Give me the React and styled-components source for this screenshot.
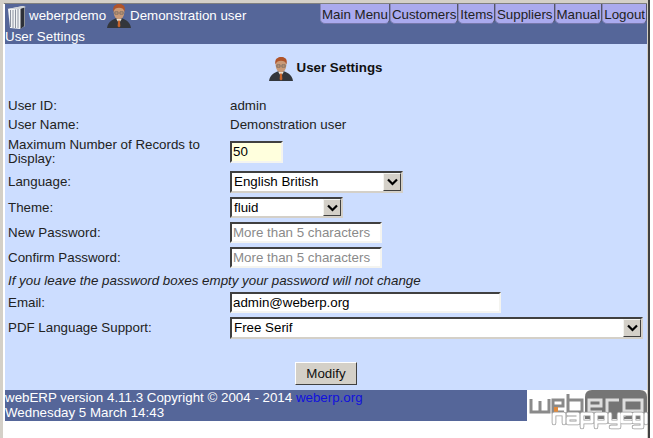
import React from "react";
import styled, { createGlobalStyle } from "styled-components";

const Global = createGlobalStyle`
  html, body { margin: 0; padding: 0; background: #fff; }
  body { font-family: "Liberation Sans", Arial, sans-serif; font-size: 13.33px; color: #222; overflow: hidden; }
`;

const Frame = styled.div`
  width: 650px; height: 438px; box-sizing: border-box;
  display: flex; flex-direction: column;
  background: #fff;
  border-top: 4px solid #d4d0c8;
  border-left: 3px solid #d4d0c8;
  border-right: 3px solid #d4d0c8;
  position: relative;
  &::before { content: ""; position: absolute; top: -1px; left: 1px; right: 0; height: 1px; background: #808080; }
  &::after { content: ""; position: absolute; top: -4px; bottom: 0; right: -3px; width: 2px; background: #404040; }
`;

const Page = styled.div`
  margin-left: 2px; display: flex; flex-direction: column; flex: 1;
`;

const Header = styled.header`
  height: 40px; background: #556699; color: #fff; position: relative; flex: none;
`;
const TopRow = styled.div`
  height: 24px; display: flex; align-items: center; justify-content: space-between;
`;
const Identity = styled.div`
  display: flex; align-items: center; font-size: 13.33px; color: #fff;
`;
const IdentityText = styled.span`margin: 0 ${p => p.$right || 0}px 2px ${p => p.$gap}px;`;
const Nav = styled.nav`display: flex; align-items: flex-start; height: 24px;`;
const NavItem = styled.a`
  display: block; height: 20px; line-height: 21px; box-sizing: border-box;
  padding: 0 1px; background: #aaaaee; color: #222; font-size: 13.33px;
  border-right: 1px solid #556; border-left: 1px solid #8888bb; border-bottom: 1px solid #7777aa;
  border-radius: 0 0 5px 5px;
`;
const Crumb = styled.div`height: 16px; line-height: 17px; font-size: 13.33px; color: #fff;`;

const Main = styled.main`
  height: 346px; flex: none; background: #ccddff; display: flex; flex-direction: column;
`;
const Title = styled.h1`
  margin: 10px 0 0; height: 30px; display: flex; justify-content: center; align-items: center;
  font-size: 13.33px; font-weight: bold; color: #111; gap: 4px; padding-right: 1px;
`;
const TitleText = styled.span`margin-bottom: 3px;`;
const Form = styled.div`
  margin-top: 12px; padding-left: 3px; display: grid; grid-template-columns: 222px 1fr; align-content: start;
`;
const Label = styled.div`
  height: ${p => p.$h}px; display: flex; align-items: center; line-height: 14px; width: 210px; color: #222;
`;
const Value = styled.div`height: ${p => p.$h}px; display: flex; align-items: center; color: #222;`;
const Note = styled.div`
  grid-column: 1 / 3; height: 20px; display: flex; align-items: center; font-style: italic; color: #222;
`;
const inset = `
  box-sizing: border-box; border-style: solid; border-width: 2px;
  border-color: #404040 #d4d0c8 #d4d0c8 #404040;
`;
const Field = styled.div`
  ${inset} width: ${p => p.$w}px; height: ${p => p.$h || 21}px; background: ${p => p.$bg || "#fff"};
  color: ${p => p.$muted ? "#8a8a8a" : "#000"}; padding-left: 1px; line-height: 17px; font-size: 13.33px;
  border-right-color: #f4f4f0; border-bottom-color: #f4f4f0;
`;
const Select = styled.div`
  ${inset} width: ${p => p.$w}px; height: ${p => p.$h}px; background: #fff; color: #000; padding-left: 1px;
  line-height: ${p => p.$h - 4}px; display: flex; justify-content: space-between;
`;
const OptionText = styled.span`padding-left: ${p => p.$pad || 0}px;`;
const Arrow = styled.span`
  width: 18px; height: ${p => p.$h - 4}px; box-sizing: border-box; background: #d4d0c8; flex: none;
  border: 1px solid; border-color: #f4f4f0 #404040 #404040 #f4f4f0;
  display: flex; align-items: center; justify-content: center;
`;
const Actions = styled.div`display: flex; justify-content: center; margin-top: 22px;`;
const Button = styled.button`
  width: 62px; height: 23px; padding: 0; background: #d4d0c8; color: #111;
  font-family: inherit; font-size: 13.33px;
  border: 1px solid; border-color: #fff #404040 #404040 #fff;
`;

const Footer = styled.footer`
  height: 31px; flex: none; display: flex; position: relative;
`;
const FooterText = styled.div`
  width: 522px; background: #556699; color: #fff; line-height: 15px; box-sizing: border-box; font-size: 13.33px;
`;
const Link = styled.a`color: #1111dd;`;
const Logo = styled.div`flex: 1; position: relative;`;
const LogoMark = styled.svg`position: absolute; left: 0; top: 0; overflow: visible;`;

const Chevron = () => (
  <svg width="11" height="8" viewBox="0 0 11 8"><path d="M1 1.5 L5.5 6 L10 1.5" fill="none" stroke="#000" strokeWidth="2.2" /></svg>
);

const Avatar = () => (
  <svg width="24" height="24" viewBox="0 0 26 26" style={{ flex: "none" }}>
    <path d="M0 26 C1 19 6 17 10 15.5 L16 15.5 C20 17 25 19 26 26 Z" fill="#33363b" />
    <path d="M10 16 L13 21 L16 16 Z" fill="#efe8dc" />
    <path d="M12 18 L14 18 L14.5 24 L13 25.5 L11.5 24 Z" fill="#c8642a" />
    <ellipse cx="13" cy="9" rx="5.8" ry="7.4" fill="#c99a78" />
    <path d="M7 8 C5.5 2 10 0 13 0 C17 0 20.5 2 19 8 C18 5 16 4 13 4 C10 4 8 5 7 8 Z" fill="#b0542a" />
    <path d="M8.5 8.5 H12 V11 H8.5 Z M14 8.5 H17.5 V11 H14 Z" fill="none" stroke="#5c5c5c" strokeWidth="0.7" />
  </svg>
);

const CompanyIcon = () => (
  <svg width="22" height="25" viewBox="0 0 22 25" style={{ flex: "none" }}>
    <path d="M3 5 L18 2 L20 3 L20 22 L15 25 L5 24 Z" fill="#f2f4f6" />
    <path d="M15.5 4 L19.5 3 L19.5 22 L15.5 25 Z" fill="#2c3038" />
    <path d="M5.5 6 V23 M8 6 V24 M10.5 5.5 V24 M13 5 V24" stroke="#8c92a0" strokeWidth="1" />
    <path d="M2 5 L18 2 L21 3 L15 5 Z" fill="#d0d4d8" />
  </svg>
);

const nappyPaths = (
  <>
    <path d="M27 33 V24 H37 V33" />
    <path d="M41 24 H51 V33 H41 V28 H51" />
    <path d="M55 37 V24 H65 V32 H55" />
    <path d="M69 37 V24 H79 V32 H69" />
    <path d="M83 24 V32 H92 M92 24 V37 H84" />
    <path d="M104 24 H95 V32 H104" />
    <path d="M107 37 H115 V24 H107 V32 H115" />
    <path d="M119 24 V33" />
  </>
);

const WebErpLogo = () => (
  <LogoMark width="120" height="46" viewBox="0 0 120 46">
    <path d="M58 7 Q58 0 65 0 H113 Q120 0 120 7 V24 Q120 29 115 29 H58 Z" fill="#757575" />
    <g fill="none" stroke="#8a8a8a" strokeWidth="3">
      <path d="M4 9 V22 H13 V11 M13 22 H22 V9" />
      <path d="M37 22 H26 V10 H36 V16 H26" />
      <path d="M41 4 V22 H55 V10 H41" />
    </g>
    <g fill="none" stroke="#dedede" strokeWidth="3">
      <path d="M75 22 H62 V10 H74 V16 H62" />
      <path d="M80 24 V10 H92" />
      <path d="M97 27 V10 H115 V21 H97" />
    </g>
    <rect x="27" y="17" width="4" height="7" fill="#e08a3c" />
    <g fill="none" stroke="#9a9a9a" strokeWidth="4.6" strokeLinejoin="round" strokeLinecap="round">{nappyPaths}</g>
    <g fill="none" stroke="#fff" strokeWidth="3" strokeLinejoin="round" strokeLinecap="round">{nappyPaths}</g>
  </LogoMark>
);

const nav = ["Main Menu", "Customers", "Items", "Suppliers", "Manual", "Logout"];

export default function App() {
  return (
    <Frame>
      <Global />
      <Page>
        <Header>
          <TopRow>
            <Identity>
              <CompanyIcon />
              <IdentityText $gap={2} $right={1}>weberpdemo</IdentityText>
              <Avatar />
              <IdentityText $gap={-1}>Demonstration user</IdentityText>
            </Identity>
            <Nav>
              {nav.map(n => <NavItem key={n}>{n}</NavItem>)}
            </Nav>
          </TopRow>
          <Crumb>User Settings</Crumb>
        </Header>
        <Main>
          <Title><Avatar /><TitleText>User Settings</TitleText></Title>
          <Form>
            <Label $h={19}>User ID:</Label><Value $h={19}>admin</Value>
            <Label $h={19}>User Name:</Label><Value $h={19}>Demonstration user</Value>
            <Label $h={35}>Maximum Number of Records to Display:</Label><Value $h={35}><Field $w={53} $h={22} $bg="#ffffdd">50</Field></Value>
            <Label $h={26}>Language:</Label><Value $h={26}><Select $w={173} $h={22}><OptionText $pad={1}>English British</OptionText><Arrow $h={22}><Chevron /></Arrow></Select></Value>
            <Label $h={25}>Theme:</Label><Value $h={25}><Select $w={113} $h={21}><OptionText $pad={1}>fluid</OptionText><Arrow $h={21}><Chevron /></Arrow></Select></Value>
            <Label $h={25}>New Password:</Label><Value $h={25}><Field $w={152} $muted>More than 5 characters</Field></Value>
            <Label $h={25}>Confirm Password:</Label><Value $h={25}><Field $w={152} $muted>More than 5 characters</Field></Value>
            <Note>If you leave the password boxes empty your password will not change</Note>
            <Label $h={25}>Email:</Label><Value $h={25}><Field $w={271}>admin@weberp.org</Field></Value>
            <Label $h={25}>PDF Language Support:</Label><Value $h={25}><Select $w={413} $h={22}><OptionText $pad={1}>Free Serif</OptionText><Arrow $h={22}><Chevron /></Arrow></Select></Value>
          </Form>
          <Actions><Button>Modify</Button></Actions>
        </Main>
        <Footer>
          <FooterText>
            webERP version 4.11.3 Copyright © 2004 - 2014 <Link>weberp.org</Link><br />
            Wednesday 5 March 14:43
          </FooterText>
          <Logo><WebErpLogo /></Logo>
        </Footer>
      </Page>
    </Frame>
  );
}
